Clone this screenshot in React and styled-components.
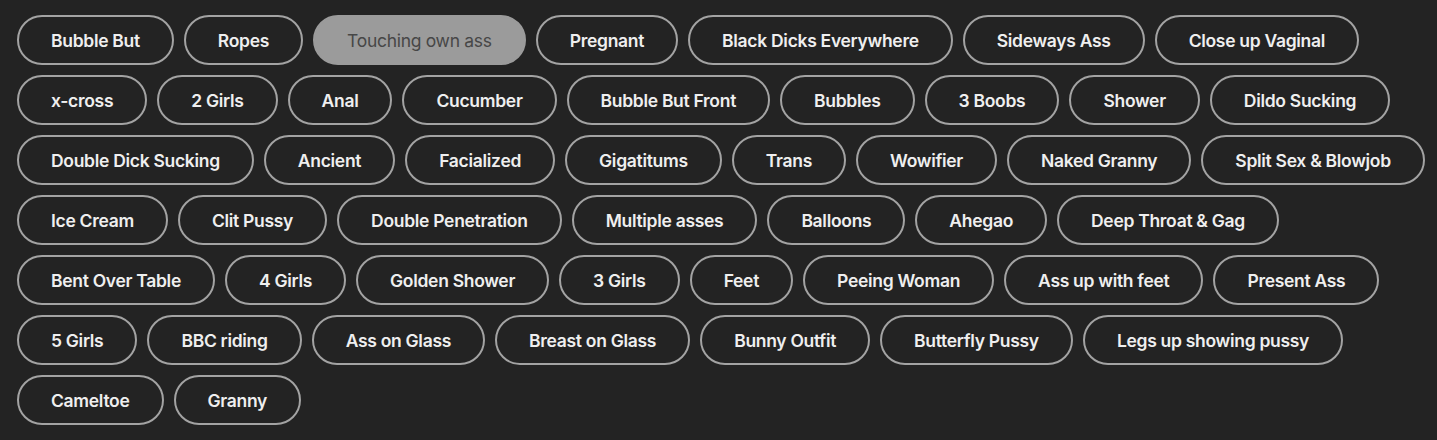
import React from "react";
import styled, { createGlobalStyle } from "styled-components";

const Global = createGlobalStyle`
  html, body {
    margin: 0;
    padding: 0;
    background: #232323;
  }
  body {
    font-family: "Inter", "Open Sans", sans-serif;
  }
`;

const TagList = styled.div`
  display: flex;
  flex-wrap: wrap;
  align-items: flex-start;
  gap: 10px 10px;
  padding: 15px 8px 16px 17px;
  background: #232323;
  min-height: 440px;
  box-sizing: border-box;
  align-content: flex-start;
`;

const Tag = styled.button`
  box-sizing: border-box;
  height: 50px;
  padding: 0 32px;
  border: 2px solid ${(p) => (p.$active ? "#9b9b9b" : "#a3a3a3")};
  border-radius: 25px;
  background: ${(p) => (p.$active ? "#9b9b9b" : "transparent")};
  color: ${(p) => (p.$active ? "#474747" : "#efefef")};
  font-family: "Inter", "Open Sans", sans-serif;
  font-size: 17.5px;
  font-weight: ${(p) => (p.$active ? 400 : 600)};
  letter-spacing: -0.3px;
  white-space: nowrap;
  cursor: pointer;
  display: inline-flex;
  align-items: center;
  justify-content: center;
`;

const tags = [
  "Bubble But", "Ropes", "Touching own ass", "Pregnant", "Black Dicks Everywhere", "Sideways Ass", "Close up Vaginal",
  "x-cross", "2 Girls", "Anal", "Cucumber", "Bubble But Front", "Bubbles", "3 Boobs", "Shower", "Dildo Sucking",
  "Double Dick Sucking", "Ancient", "Facialized", "Gigatitums", "Trans", "Wowifier", "Naked Granny", "Split Sex & Blowjob",
  "Ice Cream", "Clit Pussy", "Double Penetration", "Multiple asses", "Balloons", "Ahegao", "Deep Throat & Gag",
  "Bent Over Table", "4 Girls", "Golden Shower", "3 Girls", "Feet", "Peeing Woman", "Ass up with feet", "Present Ass",
  "5 Girls", "BBC riding", "Ass on Glass", "Breast on Glass", "Bunny Outfit", "Butterfly Pussy", "Legs up showing pussy",
  "Cameltoe", "Granny",
];

export default function App() {
  return (
    <>
      <Global />
      <TagList>
        {tags.map((t) => (
          <Tag key={t} $active={t === "Touching own ass"}>
            {t}
          </Tag>
        ))}
      </TagList>
    </>
  );
}
